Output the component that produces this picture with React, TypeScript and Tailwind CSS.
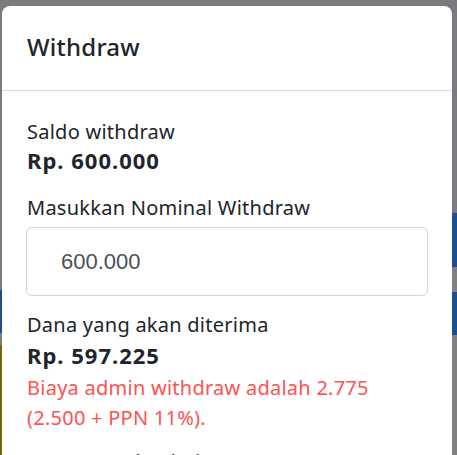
import React from "react";

export default function App() {
  return (
    <div className="flex h-[455px] w-[457px] overflow-hidden bg-[#7a7b7e]" style={{ fontFamily: '"Noto Sans", sans-serif' }}>
      <div className="flex w-[2px] shrink-0 flex-col">
        <div className="h-[290px] bg-[#7a7b7e]" />
        <div className="h-[43px] bg-[#1d4f8f]" />
        <div className="h-[12px] bg-[#7d7e80]" />
        <div className="flex-1 bg-[#7a6208]" />
      </div>
      <div className="mt-[6px] w-[450px] shrink-0 rounded-t-lg bg-white text-[#212529]">
        <div className="border-b border-[#d8dadf] px-[25px] pt-[23px] pb-[25px]">
          <h5 className="text-[24px] leading-[36px] font-medium tracking-[0.25px]">Withdraw</h5>
        </div>
        <div className="px-[25px] pt-[26px] tracking-[0.25px]">
          <p className="text-[20px] leading-[30px]">Saldo withdraw</p>
          <p className="text-[22px] leading-[26px] font-bold tracking-[1px]">Rp. 600.000</p>
          <p className="mt-[20px] text-[20px] leading-[30px]">Masukkan Nominal Withdraw</p>
          <div className="mt-[4px] flex h-[69px] w-[402px] -ml-[1px] items-center rounded-md border border-[#ced4da] pl-[34px] tracking-normal">
            <span className="text-[22px] text-[#495057]" style={{ fontFamily: '"Liberation Sans", Arial, sans-serif' }}>
              600.000
            </span>
          </div>
          <p className="mt-[14px] text-[20px] leading-[30px]">Dana yang akan diterima</p>
          <p className="mt-[2px] text-[22px] leading-[26px] font-bold tracking-[1px]">Rp. 597.225</p>
          <p className="mt-[5px] text-[20px] leading-[30px] text-[#ff5252]">
            Biaya admin withdraw adalah 2.775
            <br />
            (2.500 + PPN 11%).
          </p>
          <p className="mt-[14px] text-[20px] leading-[30px]">Pesan untuk admin</p>
        </div>
      </div>
      <div className="flex w-[5px] shrink-0 flex-col">
        <div className="h-[213px] bg-[#7a7b7e]" />
        <div className="h-[54px] bg-[#1d4f8f]" />
        <div className="h-[25px] bg-[#7f8082]" />
        <div className="h-[43px] bg-[#1d4f8f]" />
        <div className="flex-1 bg-[#808080]" />
      </div>
    </div>
  );
}
